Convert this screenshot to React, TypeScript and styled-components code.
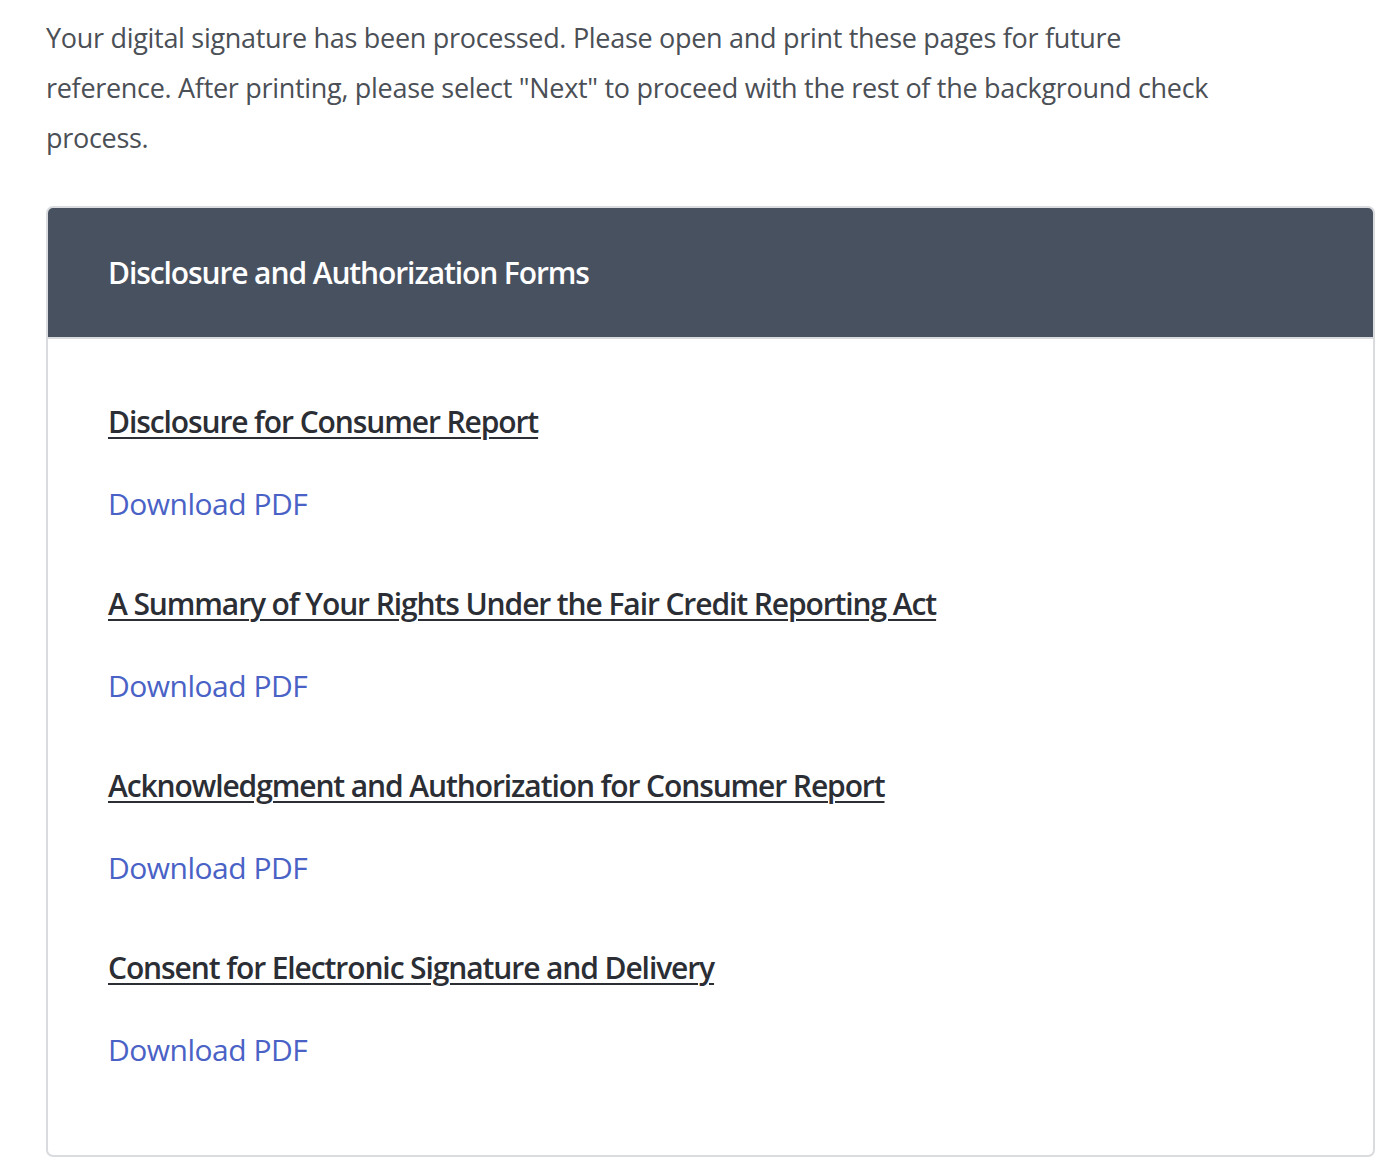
import styled, { createGlobalStyle } from "styled-components"

const GlobalStyle = createGlobalStyle`
  body {
    margin: 0;
    background: #fff;
    font-family: "Open Sans", "Liberation Sans", sans-serif;
  }
`

const forms = [
  "Disclosure for Consumer Report",
  "A Summary of Your Rights Under the Fair Credit Reporting Act",
  "Acknowledgment and Authorization for Consumer Report",
  "Consent for Electronic Signature and Delivery",
]

const Page = styled.div`
  padding: 13px 5px 16px 46px;
`

const Intro = styled.p`
  margin: 0 0 43px;
  font-size: 27px;
  line-height: 50px;
  color: #4b4f56;
  letter-spacing: -0.3px;
  white-space: nowrap;
`

const Card = styled.div`
  border: 2px solid #d9dbde;
  border-radius: 7px;
  overflow: hidden;
`

const CardHeader = styled.div`
  background: #48515f;
  height: 129px;
  display: flex;
  align-items: center;
  padding-left: 60px;
  border-bottom: 2px solid #d9dbde;
`

const HeaderTitle = styled.h2`
  margin: 0;
  color: #fff;
  font-size: 30px;
  font-weight: 600;
  letter-spacing: -1.1px;
`

const CardBody = styled.div`
  padding: 58px 60px 80px;
  display: flex;
  flex-direction: column;
  gap: 50px;
`

const FormItem = styled.div`
  display: flex;
  flex-direction: column;
  gap: 32px;
`

const FormTitle = styled.a`
  color: #2b2e34;
  font-size: 30px;
  font-weight: 600;
  letter-spacing: -1.1px;
  line-height: 50px;
  text-decoration: underline;
  text-underline-offset: 4px;
  text-decoration-thickness: 2px;
  align-self: flex-start;
`

const DownloadLink = styled.a`
  color: #4a62c6;
  font-size: 30px;
  line-height: 50px;
  letter-spacing: -0.5px;
  text-decoration: none;
  align-self: flex-start;
`

export default function App() {
  return (
    <Page>
      <GlobalStyle />
      <Intro>
        Your digital signature has been processed. Please open and print these pages for future
        <br />
        reference. After printing, please select "Next" to proceed with the rest of the background check
        <br />
        process.
      </Intro>
      <Card>
        <CardHeader>
          <HeaderTitle>Disclosure and Authorization Forms</HeaderTitle>
        </CardHeader>
        <CardBody>
          {forms.map((f) => (
            <FormItem key={f}>
              <FormTitle href="#">{f}</FormTitle>
              <DownloadLink href="#">Download PDF</DownloadLink>
            </FormItem>
          ))}
        </CardBody>
      </Card>
    </Page>
  )
}
